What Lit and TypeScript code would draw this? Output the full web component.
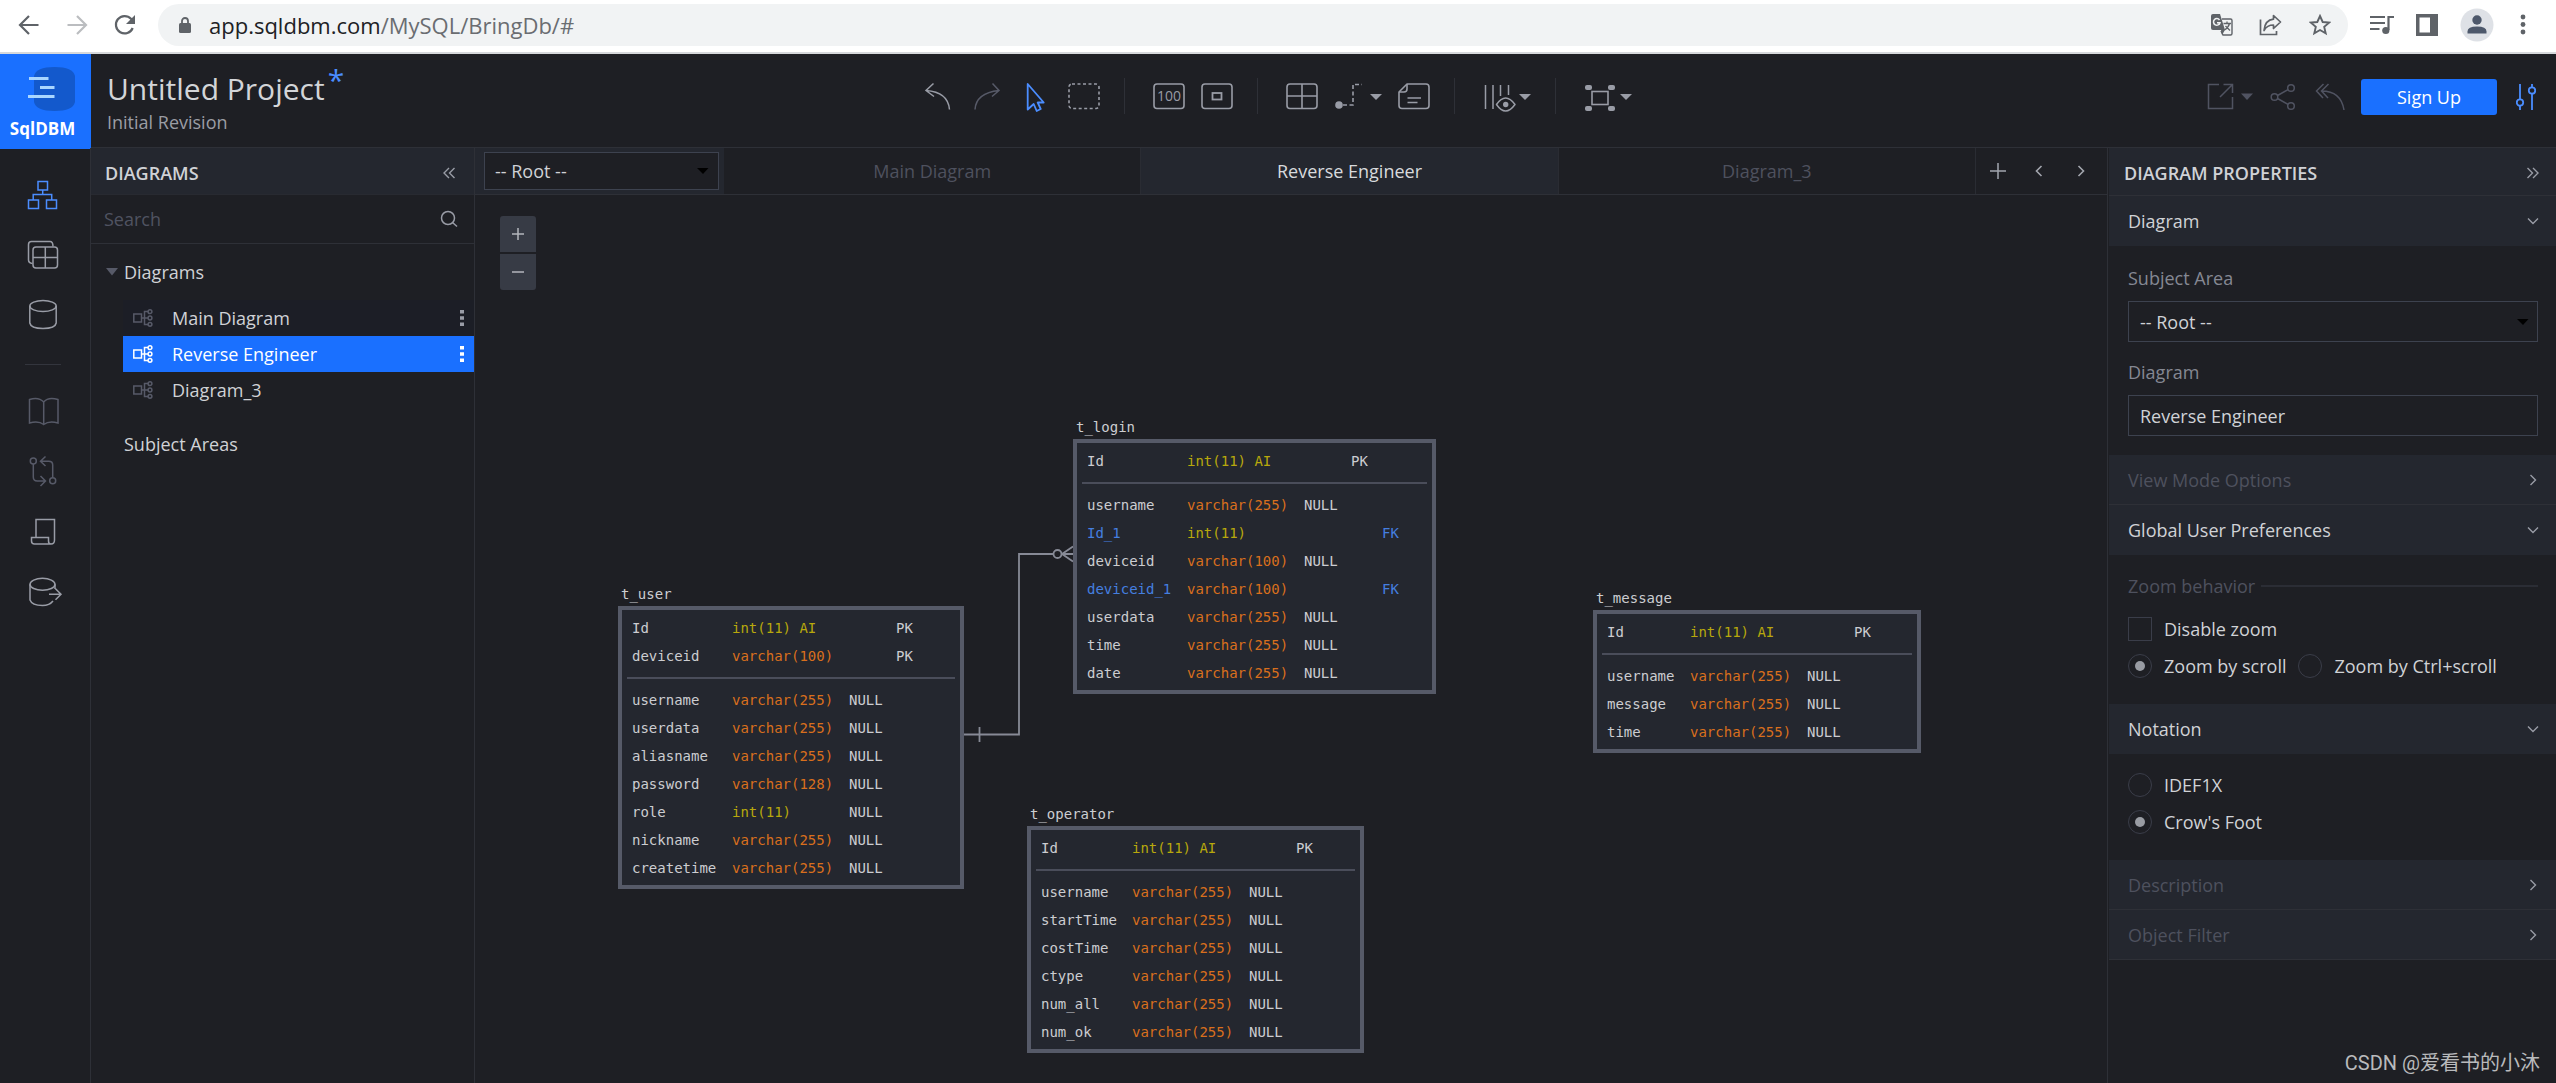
import { LitElement, html, svg, css, nothing, TemplateResult } from "lit";
import { customElement, property, state } from "lit/decorators.js";
import { classMap } from "lit/directives/class-map.js";

/* ---------- icons ---------- */

const icon = (w: number, h: number, body: unknown) => html`
  <svg width=${w} height=${h} viewBox="0 0 ${w} ${h}" fill="none" stroke="currentColor" stroke-width="1.5" aria-hidden="true">${body}</svg>
`;

const caret = (x: number, y: number) => svg`<path d="M${x} ${y}h12l-6 6z" fill="currentColor" stroke="none"/>`;

const icons: Record<string, TemplateResult> = {
  back: icon(22, 22, svg`<path d="M20.500 11H2.500M11 2L2 11l9 9" stroke-width="2.200"/>`),
  forward: icon(22, 22, svg`<path d="M1.500 11h18M11 2l9 9-9 9" stroke-width="2.200"/>`),
  reload: icon(22, 22, svg`<path d="M18.700 14A8.700 8.700 0 1 1 17 4.800L19 7" stroke-width="2.200"/><path d="M21 1v9h-9z" fill="currentColor" stroke="none"/>`),
  lock: icon(12, 16, svg`<rect x="0" y="6" width="12" height="10" rx="1.500" fill="currentColor" stroke="none"/><path d="M3 7V4a3 3 0 0 1 6 0v3" stroke-width="1.800"/>`),
  translate: icon(22, 22, svg`
    <path d="M11 5h8.500q1.500 0 1.500 1.500v13q0 1.500-1.500 1.500H12l-2-4" stroke-width="1.400"/>
    <path d="M2 0h7l5 16H2q-2 0-2-2V2q0-2 2-2z" fill="currentColor" stroke="none"/>
    <path d="M10 16h4l-3 5z" fill="currentColor" stroke="none"/>
    <path d="M8.500 6A3.300 3.300 0 1 0 9 8.700H6" stroke="#f1f3f4" stroke-width="1.500"/>
    <path d="M12.500 9.500H20M16 7.500v2M18.500 9.500q-1 4-5 6.500M14.500 12l4.500 4.500" stroke-width="1.300"/>`),
  shareOut: icon(24, 22, svg`<path d="M1.500 5.500V20.500h16V17" stroke-width="1.700"/><path d="M14.500 1.500l7 6.500-7 6.500V11Q8 11 5 16.500 6 6 14.500 5.200z" stroke-width="1.700" stroke-linejoin="round"/>`),
  star: icon(22, 22, svg`<path d="M11 2l2.700 6 6.400.6-4.900 4.300 1.500 6.400L11 16l-5.700 3.300 1.500-6.400L1.900 8.600l6.400-.6z" stroke-width="1.900"/>`),
  playlist: icon(24, 20, svg`<path d="M0 2h15M0 8h15M0 14h9.500" stroke-width="2.200"/><path d="M18.500 15V2H24" stroke-width="2.200"/><circle cx="15.800" cy="15.500" r="3.600" fill="currentColor" stroke="none"/>`),
  sidePanel: icon(22, 22, svg`<path fill-rule="evenodd" d="M0 0h22v22H0zM3.500 3.500v15H14v-15z" fill="currentColor" stroke="none"/>`),
  avatar: html`<svg width="34" height="34" viewBox="0 0 34 34" aria-hidden="true"><circle cx="17" cy="17" r="16.500" fill="#dee1e6"/><circle cx="17" cy="12" r="4.700" fill="#4d586b"/><path d="M7.500 25.500v-2q0-5 9.500-5t9.500 5v2z" fill="#4d586b"/></svg>`,
  menu: icon(6, 22, svg`<g fill="currentColor" stroke="none"><circle cx="3" cy="3" r="2.400"/><circle cx="3" cy="10.500" r="2.400"/><circle cx="3" cy="18" r="2.400"/></g>`),

  undo: icon(32, 32, svg`<path d="M9.500 3.500L2 10.500l8 6M2 10.500Q24 12 25.500 29.500"/>`),
  redo: icon(32, 32, svg`<path d="M20.500 3.500L27 10.500l-7 6M27 10.500Q4 13 3 29.500"/>`),
  cursor: icon(32, 32, svg`<path d="M7.700 4v25.500l6-5.500 3 7 4-2-3-6.500h6z" stroke-width="1.800" stroke-linejoin="round"/>`),
  marquee: icon(32, 32, svg`<rect x="1" y="4" width="30" height="24.500" rx="3" stroke-width="1.600" stroke-dasharray="3 2.500"/>`),
  actual: html`<svg width="32" height="32" viewBox="0 0 32 32" fill="none" stroke="currentColor" stroke-width="1.600" aria-hidden="true"><rect x="1" y="4" width="30" height="24.500" rx="3"/><text x="16" y="21" text-anchor="middle" fill="currentColor" stroke="none" font-family="Open Sans, sans-serif" font-size="14">100</text></svg>`,
  fit: icon(32, 32, svg`<rect x="1" y="4" width="30" height="24.500" rx="3" stroke-width="1.600"/><rect x="11.500" y="13" width="9" height="6.500" stroke-width="1.800"/>`),
  table: icon(32, 32, svg`<rect x="1" y="4" width="30" height="24.500" rx="3" stroke-width="1.600"/><path d="M16 4v24.500M1 16h30" stroke-width="1.600"/>`),
  relation: icon(48, 32, svg`<circle cx="5" cy="25" r="3.800" fill="currentColor" stroke="none"/><path d="M9 25h10V4.500h9" stroke-width="1.600" stroke-dasharray="4 2.500"/>${caret(36, 14)}`),
  note: icon(32, 32, svg`<path d="M9 4h19q3 0 3 3v18.500q0 3-3 3H4q-3 0-3-3V12z" stroke-width="1.600" stroke-linejoin="round"/><path d="M9 4v5q0 3-3 3H1M9.500 18h13.500M9.500 22.500h10" stroke-width="1.600"/>`),
  columns: icon(48, 32, svg`<path d="M2.500 5v24M10 5v24M17.500 5v11M25.500 5v10" stroke-width="1.500"/><path d="M13.500 24.500q9-13 18.500 0-9.500 13-18.500 0z" stroke-width="1.500" stroke-linejoin="round"/><circle cx="22.700" cy="24.500" r="2.700" fill="currentColor" stroke="none"/>${caret(36, 14)}`),
  bounds: icon(48, 32, svg`<rect x="8" y="11.500" width="16" height="13" stroke-width="1.600"/><g fill="currentColor" stroke="none"><rect x="1" y="5" width="7" height="5" rx="2"/><rect x="24" y="5" width="7" height="5" rx="2"/><rect x="1" y="26" width="7" height="5" rx="2"/><rect x="24" y="26" width="7" height="5" rx="2"/></g>${caret(36, 14)}`),

  export: icon(46, 28, svg`<path d="M12 1.500H1.500v24h24V14M16.500 1.500h9V10M25 2L13 14"/><path d="M34 10.500h12l-6 6.500z" fill="currentColor" stroke="none"/>`),
  share: icon(26, 28, svg`<circle cx="4.500" cy="14" r="3.300"/><circle cx="21" cy="5" r="3.300"/><circle cx="21" cy="23" r="3.300"/><path d="M7.500 12.500L18 6.600M7.500 15.500L18 21.400"/>`),
  replyAll: icon(30, 28, svg`<path d="M8.500 1L1.500 8l6.500 7M13.500 1L6.500 8l6.500 7M6.500 8Q26 8 29 27"/>`),
  sliders: icon(20, 28, svg`<path d="M4 1v15M4 23v4M16 1v3M16 11v16" stroke-width="1.800"/><circle cx="4" cy="19.500" r="3.200" stroke-width="1.800"/><circle cx="16" cy="7.500" r="3.200" stroke-width="1.800"/>`),

  railDiagrams: icon(40, 40, svg`<path d="M13 6.500h9.500V15H13zM3.500 25h10v8.500h-10zM21.500 25h10v8.500h-10zM17.700 15v4.500M8.200 25v-5.500h18.500V25"/>`),
  railTables: icon(40, 40, svg`<rect x="8" y="12" width="24.500" height="21" rx="3"/><path d="M20.300 12v21M8 22.500h24.500M28 11.500q0-5-3-5H6.500q-3 0-3 3V25q0 3 4 3.500"/>`),
  railDatabase: icon(40, 40, svg`<ellipse cx="18" cy="11" rx="13.200" ry="5.500"/><path d="M4.800 11v17q1 5.500 13.200 5.500T31.200 28V11"/>`),
  railBook: icon(40, 40, svg`<path d="M18.700 10C15 6 9 6 4.500 7.500V31q9-2.500 14.200 1.500Q24 28.500 33 31V7.500C28 6 22 6 18.700 10V32.500"/>`),
  railCompare: icon(40, 40, svg`<circle cx="8.300" cy="9" r="3"/><circle cx="27.700" cy="28.700" r="3"/><path d="M8.300 12v13q0 4 4 4h8M15.500 24l5 5-5 5M27.700 25.500V13q0-3.700-4-3.700H16M20.500 4.500l-5 4.800 5 4.700"/>`),
  railScript: icon(40, 40, svg`<path d="M11 25.500v-18h18.500V28q0 4-3.500 4H9.500q-3 0-3-3v-3.500h17V29q0 3 2.500 3"/>`),
  railForward: icon(40, 40, svg`<ellipse cx="17.500" cy="12.300" rx="12.500" ry="6"/><path d="M5 12.300V28q2 5.500 12.500 5.500 7 0 10.500-4.500M30 12.300V17M24 22.300h12M30.500 16.800l5.500 5.500-5.500 5.500"/>`),

  search: icon(18, 18, svg`<circle cx="8" cy="8" r="6.500"/><path d="M12.500 12.500l4.500 4"/>`),
  collapseLeft: icon(14, 14, svg`<path d="M7 2L2 7l5 5M12.500 2l-5 5 5 5" stroke-width="1.400"/>`),
  collapseRight: icon(14, 14, svg`<path d="M1.500 2l5 5-5 5M7 2l5 5-5 5" stroke-width="1.400"/>`),
  node: icon(20, 18, svg`<path d="M.8 5h7.700v8H.8zM8.500 9H15M15 2.500h-3.500v13H15"/><circle cx="17" cy="2.700" r="1.900"/><circle cx="17" cy="9" r="1.900"/><circle cx="17" cy="15.300" r="1.900"/>`),
  kebab: icon(4, 18, svg`<path d="M0 1h4v3.500H0zM0 7.300h4v3.500H0zM0 13.500h4V17H0z" fill="currentColor" stroke="none"/>`),
  openTriangle: icon(12, 8, svg`<path d="M0 0h12L6 7.500z" fill="currentColor" stroke="none"/>`),
  selectTriangle: icon(12, 8, svg`<path d="M0 1h11.500L6 7z" fill="currentColor" stroke="none"/>`),
  down: icon(12, 8, svg`<path d="M1 1.500l5 5 5-5" stroke-width="1.400"/>`),
  right: icon(8, 12, svg`<path d="M1.500 1l5 5-5 5" stroke-width="1.400"/>`),
  left: icon(8, 12, svg`<path d="M6.500 1l-5 5 5 5" stroke-width="1.600"/>`),
  next: icon(8, 12, svg`<path d="M1.500 1l5 5-5 5" stroke-width="1.600"/>`),
  plus: icon(16, 16, svg`<path d="M8 0v16M0 8h16"/>`),
  zoomIn: icon(14, 14, svg`<path d="M7 1v12M1 7h12"/>`),
  zoomOut: icon(14, 14, svg`<path d="M1 7h12"/>`),
};

/* ---------- data ---------- */

interface Column {
  name: string;
  type: string;
  nullable?: boolean;
  pk?: boolean;
  fk?: boolean;
}

interface Entity {
  name: string;
  x: number;
  y: number;
  width: number;
  nameWidth: number;
  keys: Column[];
  columns: Column[];
}

const text = (name: string, size = 255): Column => ({ name, type: `varchar(${size})`, nullable: true });
const idKey: Column = { name: "Id", type: "int(11) AI", pk: true };

const entities: Entity[] = [
  {
    name: "t_login", x: 598, y: 216, width: 363, nameWidth: 100,
    keys: [idKey],
    columns: [
      text("username"),
      { name: "Id_1", type: "int(11)", fk: true },
      text("deviceid", 100),
      { name: "deviceid_1", type: "varchar(100)", fk: true },
      text("userdata"), text("time"), text("date"),
    ],
  },
  {
    name: "t_user", x: 143, y: 383, width: 346, nameWidth: 100,
    keys: [idKey, { name: "deviceid", type: "varchar(100)", pk: true }],
    columns: [
      text("username"), text("userdata"), text("aliasname"), text("password", 128),
      { name: "role", type: "int(11)", nullable: true },
      text("nickname"), text("createtime"),
    ],
  },
  {
    name: "t_message", x: 1118, y: 387, width: 328, nameWidth: 83,
    keys: [idKey],
    columns: [text("username"), text("message"), text("time")],
  },
  {
    name: "t_operator", x: 552, y: 603, width: 337, nameWidth: 91,
    keys: [idKey],
    columns: [
      text("username"), text("startTime"), text("costTime"),
      text("ctype"), text("num_all"), text("num_ok"),
    ],
  },
];

/* ---------- shared control reset ---------- */

const base = css`
  :host, * { box-sizing: border-box; }
  svg { display: block; flex: none; }
  button {
    margin: 0; padding: 0; border: 0; background: none; color: inherit;
    font: inherit; cursor: pointer;
    display: flex; align-items: center; justify-content: center;
  }
  h1, h2, p { margin: 0; font: inherit; }
`;

/* ---------- browser bar ---------- */

@customElement("browser-bar")
export class BrowserBar extends LitElement {
  static styles = [base, css`
    :host {
      display: flex; align-items: center; height: 54px; padding: 0 30px 2px 18px;
      background: #fff; border-bottom: 2px solid #d6d8db; color: #5f6368;
    }
    .nav { display: flex; gap: 26px; margin-right: 22px; }
    .off { color: #bbbdc0; }
    .pill {
      flex: 1; display: flex; align-items: center; height: 42px; padding: 0 17px 0 21px;
      border-radius: 21px; background: #f1f3f4;
    }
    .url { flex: 1; margin-left: 18px; font-size: 22px; line-height: 32px; color: #6a6d71; }
    .domain { color: #202124; }
    .tools { display: flex; align-items: center; gap: 26px; }
    .side { display: flex; align-items: center; gap: 22px; margin-left: 22px; }
    .side button:last-child { margin-left: 4px; }
  `];

  render() {
    return html`
      <div class="nav">
        <button aria-label="Back">${icons.back}</button>
        <button class="off" aria-label="Forward">${icons.forward}</button>
        <button aria-label="Reload">${icons.reload}</button>
      </div>
      <div class="pill">
        ${icons.lock}
        <div class="url"><span class="domain">app.sqldbm.com</span>/MySQL/BringDb/#</div>
        <div class="tools">
          <button aria-label="Translate">${icons.translate}</button>
          <button aria-label="Share page">${icons.shareOut}</button>
          <button aria-label="Bookmark">${icons.star}</button>
        </div>
      </div>
      <div class="side">
        <button aria-label="Media">${icons.playlist}</button>
        <button aria-label="Side panel">${icons.sidePanel}</button>
        <button aria-label="Profile">${icons.avatar}</button>
        <button aria-label="Menu">${icons.menu}</button>
      </div>
    `;
  }
}

/* ---------- project header ---------- */

@customElement("project-header")
export class ProjectHeader extends LitElement {
  static styles = [base, css`
    :host {
      display: grid; grid-template-columns: 1fr auto 1fr; height: 94px;
      border-bottom: 1px solid #2e3037; background: #1e1f24; color: #999ca6;
    }
    .lead { display: flex; }
    .logo {
      display: flex; flex-direction: column; align-items: center; justify-content: flex-end;
      width: 91px; height: 95px; padding: 0 6px 8px 0; background: #1a70ff; color: #fff;
      font: 700 17px/24px "Open Sans", sans-serif; text-decoration: none;
    }
    .logo svg { margin-left: 17px; }
    .titles { padding: 17px 0 0 16px; }
    .title { font-size: 30px; line-height: 36px; color: #d3d5d8; white-space: nowrap; }
    .dirty { margin-left: 3px; font-size: 30px; line-height: 0; vertical-align: 9px; color: #4b8dff; }
    .revision { margin-top: 3px; line-height: 24px; color: #9b9da4; }
    .tools { display: flex; align-items: center; padding-bottom: 12px; }
    .group { display: flex; gap: 16px; }
    .group + .group { margin-left: 24px; padding-left: 28px; border-left: 1px solid #2e3037; }
    .group button { height: 36px; }
    .active { color: #4b8dff; }
    .faint { color: #575a68; }
    .account { display: flex; align-items: center; justify-content: flex-end; padding: 0 20px 10px 0; color: #505361; }
    .share { margin-left: 17px; }
    .reply { margin-left: 19px; }
    .signup {
      width: 136px; height: 36px; margin: 0 19px 0 16px; border-radius: 3px;
      background: #1a70ff; color: #fff;
    }
    .prefs { color: #4b8dff; }
  `];

  render() {
    const tool = (name: string, label: string, cls = "") =>
      html`<button class=${cls} aria-label=${label} title=${label}>${icons[name]}</button>`;
    return html`
      <div class="lead">
        <a class="logo" href="#">
          <svg width="48" height="54" viewBox="0 0 48 54" aria-hidden="true">
            <path d="M7 13Q9 4 27.500 4T48 13V39Q46 48 27.500 48T7 39z" fill="#1359cc"/>
            <path d="M2 15.500h19.500M13 24.500h14.500M1 33.500h26.500" stroke="#a9d6ff" stroke-width="3"/>
          </svg>
          SqlDBM
        </a>
        <div class="titles">
          <h1 class="title">Untitled Project<span class="dirty">*</span></h1>
          <p class="revision">Initial Revision</p>
        </div>
      </div>
      <div class="tools">
        <div class="group">
          ${tool("undo", "Undo")}${tool("redo", "Redo", "faint")}${tool("cursor", "Select", "active")}${tool("marquee", "Area select")}
        </div>
        <div class="group">${tool("actual", "Actual size")}${tool("fit", "Fit to screen")}</div>
        <div class="group">${tool("table", "Add table")}${tool("relation", "Add relation")}${tool("note", "Add note")}</div>
        <div class="group">${tool("columns", "View mode")}</div>
        <div class="group">${tool("bounds", "Arrange")}</div>
      </div>
      <div class="account">
        <button aria-label="Export">${icons.export}</button>
        <button class="share" aria-label="Share">${icons.share}</button>
        <button class="reply" aria-label="Revert all">${icons.replyAll}</button>
        <button class="signup">Sign Up</button>
        <button class="prefs" aria-label="Preferences">${icons.sliders}</button>
      </div>
    `;
  }
}

/* ---------- icon rail ---------- */

@customElement("icon-rail")
export class IconRail extends LitElement {
  static styles = [base, css`
    :host {
      display: flex; flex-direction: column; width: 91px; padding-top: 17px;
      border-right: 1px solid #2e3037; color: #999ca6;
    }
    button { height: 60px; }
    .active { color: #4b8dff; }
    .faint { color: #575a68; }
    .rule { height: 1px; margin: 19px 29px 17px 25px; background: #33353d; }
  `];

  render() {
    return html`
      <button class="active" aria-label="Diagrams">${icons.railDiagrams}</button>
      <button aria-label="Tables">${icons.railTables}</button>
      <button aria-label="Database">${icons.railDatabase}</button>
      <div class="rule"></div>
      <button class="faint" aria-label="Documentation">${icons.railBook}</button>
      <button class="faint" aria-label="Compare">${icons.railCompare}</button>
      <button aria-label="Script">${icons.railScript}</button>
      <button aria-label="Forward engineer">${icons.railForward}</button>
    `;
  }
}

/* ---------- diagrams explorer ---------- */

@customElement("diagram-explorer")
export class DiagramExplorer extends LitElement {
  @property() selected = "";

  static styles = [base, css`
    :host { display: flex; flex-direction: column; width: 384px; border-right: 1px solid #2e3037; color: #d0d2d6; }
    .head {
      display: flex; align-items: center; justify-content: space-between; height: 47px;
      padding: 3px 18px 0 14px; background: #24272f; border-bottom: 1px solid #282a31;
    }
    .head h2 { font-weight: 600; line-height: 24px; }
    .head button { color: #999ca6; }
    .search {
      display: flex; align-items: center; height: 49px; padding: 0 16px 0 13px;
      border-bottom: 1px solid #2e3037; color: #999ca6;
    }
    .search input {
      flex: 1; min-width: 0; padding: 0; border: 0; outline: 0; background: none;
      color: #d0d2d6; font: inherit; line-height: 24px;
    }
    .search input::placeholder { color: #505361; opacity: 1; }
    .branch { gap: 6px; justify-content: flex-start; height: 36px; margin: 10px 0; padding-left: 15px; }
    .branch svg { color: #575a68; }
    .areas { height: 36px; margin-top: 18px; padding-left: 33px; line-height: 36px; }
    .row { display: flex; height: 36px; margin-left: 32px; }
    .row.hover { background: #1c1e26; }
    .row.on { background: #1a70ff; color: #fff; }
    .open { flex: 1; justify-content: flex-start; gap: 19px; padding-left: 10px; }
    .open svg { color: #575a68; }
    .more { width: 24px; color: #999ca6; }
    .on .open svg, .on .more { color: #fff; }
    ul { margin: 0; padding: 0; list-style: none; }
  `];

  private pick(name: string) {
    this.dispatchEvent(new CustomEvent("pick", { detail: name }));
  }

  render() {
    return html`
      <div class="head">
        <h2>DIAGRAMS</h2>
        <button aria-label="Collapse panel">${icons.collapseLeft}</button>
      </div>
      <div class="search">
        <input type="text" placeholder="Search" aria-label="Search" />
        ${icons.search}
      </div>
      <button class="branch" aria-expanded="true">${icons.openTriangle}Diagrams</button>
      <ul>
        ${["Main Diagram", "Reverse Engineer", "Diagram_3"].map((name, i) => html`
          <li class=${classMap({ row: true, hover: i === 0, on: name === this.selected })}>
            <button class="open" @click=${() => this.pick(name)}>${icons.node}${name}</button>
            ${i < 2 ? html`<button class="more" aria-label="More actions for ${name}">${icons.kebab}</button>` : nothing}
          </li>`)}
      </ul>
      <div class="areas">Subject Areas</div>
    `;
  }
}

/* ---------- entity box ---------- */

@customElement("entity-box")
export class EntityBox extends LitElement {
  @property({ attribute: false }) entity!: Entity;

  static styles = [base, css`
    :host { display: block; font: 14px/28px "DejaVu Sans Mono", "Liberation Mono", monospace; color: #cccdd1; }
    table {
      width: 100%; border-collapse: separate; border-spacing: 0; table-layout: fixed;
      padding: 4px 5px 3px; border: 4px solid #565a68; background: #24272f;
    }
    caption { padding: 4px 0 0 3px; text-align: left; line-height: 24px; }
    td, th { height: 28px; padding: 0; text-align: left; font-weight: 400; white-space: nowrap; }
    th { padding-left: 5px; }
    .type { width: 117px; }
    .null { width: 47px; }
    .pk { width: 31px; }
    .split td { height: 16px; line-height: 0; }
    .split hr { margin: 0; height: 2px; border: 0; background: #4a4d5a; }
    .num { color: #b8a80c; }
    .str { color: #d96f1d; }
    .foreign { color: #457fe0; }
  `];

  private row(c: Column) {
    return html`
      <tr>
        <th scope="row" class=${c.fk ? "foreign" : ""}>${c.name}</th>
        <td class=${c.type.startsWith("int") ? "num" : "str"}>${c.type}</td>
        <td>${c.nullable ? "NULL" : nothing}</td>
        <td>${c.pk ? "PK" : nothing}</td>
        <td class="foreign">${c.fk ? "FK" : nothing}</td>
      </tr>`;
  }

  render() {
    const e = this.entity;
    return html`
      <table>
        <caption>${e.name}</caption>
        <colgroup>
          <col style="width:${e.nameWidth + 5}px" />
          <col class="type" /><col class="null" /><col class="pk" /><col />
        </colgroup>
        <tbody>${e.keys.map((c) => this.row(c))}</tbody>
        <tbody class="split"><tr><td colspan="5"><hr /></td></tr></tbody>
        <tbody>${e.columns.map((c) => this.row(c))}</tbody>
      </table>
    `;
  }
}

/* ---------- workspace: tabs and canvas ---------- */

@customElement("diagram-workspace")
export class DiagramWorkspace extends LitElement {
  @property() selected = "";

  static styles = [base, css`
    :host { display: flex; flex-direction: column; min-width: 0; border-right: 1px solid #2e3037; }
    .tabs { display: flex; height: 47px; border-bottom: 1px solid #2e3037; }
    .area { display: grid; align-items: center; width: 249px; padding: 0 5px 0 9px; background: #24272f; }
    .area > * { grid-area: 1 / 1; }
    .area svg { justify-self: end; margin-right: 10px; color: #000; pointer-events: none; }
    select {
      width: 100%; height: 38px; padding: 0 10px; border: 1px solid #3d424f; border-radius: 0;
      background: #1e1f24; color: #d0d2d6; font: inherit; appearance: none;
    }
    .tab { flex: 1; border-right: 1px solid #2a2c33; color: #4e515e; }
    .tab.on { background: #24272f; color: #d8dadd; }
    .paging { display: flex; width: 131px; padding: 0 5px 0 1px; color: #a3a6ae; }
    .paging button { flex: 1; }
    .canvas { flex: 1; position: relative; overflow: hidden; }
    .zoom { position: absolute; left: 25px; top: 21px; display: flex; flex-direction: column; gap: 2px; }
    .zoom button { width: 36px; height: 36px; background: #373b45; color: #b4b6bc; }
    .zoom button:first-child { border-radius: 3px 3px 0 0; }
    .zoom button:last-child { border-radius: 0 0 3px 3px; }
    .entity, .links { position: absolute; }
    .links { left: 489px; top: 340px; color: #878a96; }
  `];

  render() {
    return html`
      <div class="tabs">
        <div class="area">
          <select aria-label="Subject area"><option>-- Root --</option></select>
          ${icons.selectTriangle}
        </div>
        ${["Main Diagram", "Reverse Engineer", "Diagram_3"].map((name) => html`
          <button class=${classMap({ tab: true, on: name === this.selected })}
            @click=${() => this.dispatchEvent(new CustomEvent("pick", { detail: name }))}>${name}</button>`)}
        <div class="paging">
          <button aria-label="Add diagram">${icons.plus}</button>
          <button aria-label="Previous tab">${icons.left}</button>
          <button aria-label="Next tab">${icons.next}</button>
        </div>
      </div>
      <div class="canvas">
        <div class="zoom">
          <button aria-label="Zoom in">${icons.zoomIn}</button>
          <button aria-label="Zoom out">${icons.zoomOut}</button>
        </div>
        <svg class="links" width="110" height="210" viewBox="0 0 110 210" fill="none" stroke="currentColor" stroke-width="1.800" aria-hidden="true">
          <path d="M0 199.500H55V19H89M15.500 192v15M98 19h12M98 19l11-7.500M98 19l11 7.500"/>
          <circle cx="93.500" cy="19" r="4"/>
        </svg>
        ${entities.map((e) => html`
          <entity-box class="entity" .entity=${e} style="left:${e.x}px;top:${e.y}px;width:${e.width}px"></entity-box>`)}
      </div>
    `;
  }
}

/* ---------- properties panel ---------- */

@customElement("diagram-properties")
export class DiagramProperties extends LitElement {
  @property() diagram = "";

  static styles = [base, css`
    :host { display: flex; flex-direction: column; width: 447px; color: #d0d2d6; }
    .head {
      display: flex; align-items: center; justify-content: space-between; height: 48px;
      padding: 3px 16px 0 15px; background: #24272f; border-bottom: 1px solid #2e3037;
    }
    .head h2 { font-weight: 600; line-height: 24px; }
    .head button, .section svg { color: #999ca6; }
    .section {
      justify-content: space-between; height: 50px; padding: 0 17px 0 19px;
      background: #24272f; border-bottom: 1px solid #2e3037;
    }
    .section svg { width: 12px; }
    .section.open { border-color: #24272f; }
    .section.shut { color: #4e515e; }
    .body { display: flex; flex-direction: column; padding: 20px 18px 19px 19px; }
    .choices { padding: 19px 18px 26px 19px; gap: 13px; }
    .field { display: flex; flex-direction: column; gap: 11px; color: #858893; line-height: 24px; }
    .field + .field { margin-top: 18px; }
    .box { display: grid; align-items: center; }
    .box > * { grid-area: 1 / 1; }
    .box svg { justify-self: end; margin-right: 9px; color: #000; pointer-events: none; }
    select, input[type="text"] {
      width: 100%; height: 41px; padding: 0 11px; border: 1px solid #3d424f; border-radius: 0;
      background: #1e1f24; color: #d0d2d6; font: inherit; appearance: none;
    }
    .legend { display: flex; align-items: center; gap: 6px; margin-bottom: 6px; line-height: 24px; color: #4e515e; }
    .legend::after { content: ""; flex: 1; height: 2px; background: #2b2d35; }
    .line { display: flex; gap: 12px; }
    .opt { display: flex; align-items: center; gap: 12px; line-height: 24px; }
    .opt input {
      flex: none; width: 24px; height: 24px; margin: 0; appearance: none;
      border: 1px solid #3a3d49; background: transparent;
    }
    .opt input[type="radio"] { border-radius: 50%; display: grid; place-items: center; }
    .opt input[type="radio"]:checked::before {
      content: ""; width: 10px; height: 10px; border-radius: 50%; background: #999ca3;
    }
  `];

  private section(title: string, open: boolean) {
    return html`<button class="section ${open ? "open" : "shut"}" aria-expanded=${open}>${title}${open ? icons.down : icons.right}</button>`;
  }

  render() {
    const radio = (group: string, label: string, on = false) =>
      html`<label class="opt"><input type="radio" name=${group} ?checked=${on} />${label}</label>`;
    return html`
      <div class="head">
        <h2>DIAGRAM PROPERTIES</h2>
        <button aria-label="Collapse panel">${icons.collapseRight}</button>
      </div>
      ${this.section("Diagram", true)}
      <div class="body">
        <label class="field">Subject Area
          <span class="box">
            <select><option>-- Root --</option></select>
            ${icons.selectTriangle}
          </span>
        </label>
        <label class="field">Diagram
          <input type="text" .value=${this.diagram} />
        </label>
      </div>
      ${this.section("View Mode Options", false)}
      ${this.section("Global User Preferences", true)}
      <div class="body choices">
        <div class="legend">Zoom behavior</div>
        <label class="opt"><input type="checkbox" />Disable zoom</label>
        <div class="line">
          ${radio("zoom", "Zoom by scroll", true)}
          ${radio("zoom", "Zoom by Ctrl+scroll")}
        </div>
      </div>
      ${this.section("Notation", true)}
      <div class="body choices">
        ${radio("notation", "IDEF1X")}
        ${radio("notation", "Crow's Foot", true)}
      </div>
      ${this.section("Description", false)}
      ${this.section("Object Filter", false)}
    `;
  }
}

/* ---------- application ---------- */

@customElement("app-root")
export class AppRoot extends LitElement {
  @state() private selected = "Reverse Engineer";

  static styles = css`
    :host {
      display: flex; flex-direction: column; position: relative; min-height: 100vh;
      background: #1e1f24; font: 18px/24px "Open Sans", "Noto Sans", sans-serif; overflow: hidden;
    }
    .main { flex: 1; display: flex; }
    diagram-workspace { flex: 1; }
    diagram-properties { margin-left: 1px; }
    .credit {
      position: absolute; right: 16px; bottom: 8px; color: #b9babc;
      font: 20px/24px Roboto, "Noto Sans CJK SC", sans-serif;
    }
  `;

  private pick(e: CustomEvent<string>) {
    this.selected = e.detail;
  }

  render() {
    return html`
      <browser-bar></browser-bar>
      <project-header></project-header>
      <div class="main">
        <icon-rail></icon-rail>
        <diagram-explorer .selected=${this.selected} @pick=${this.pick}></diagram-explorer>
        <diagram-workspace .selected=${this.selected} @pick=${this.pick}></diagram-workspace>
        <diagram-properties .diagram=${this.selected}></diagram-properties>
      </div>
      <div class="credit">CSDN @爱看书的小沐</div>
    `;
  }
}
